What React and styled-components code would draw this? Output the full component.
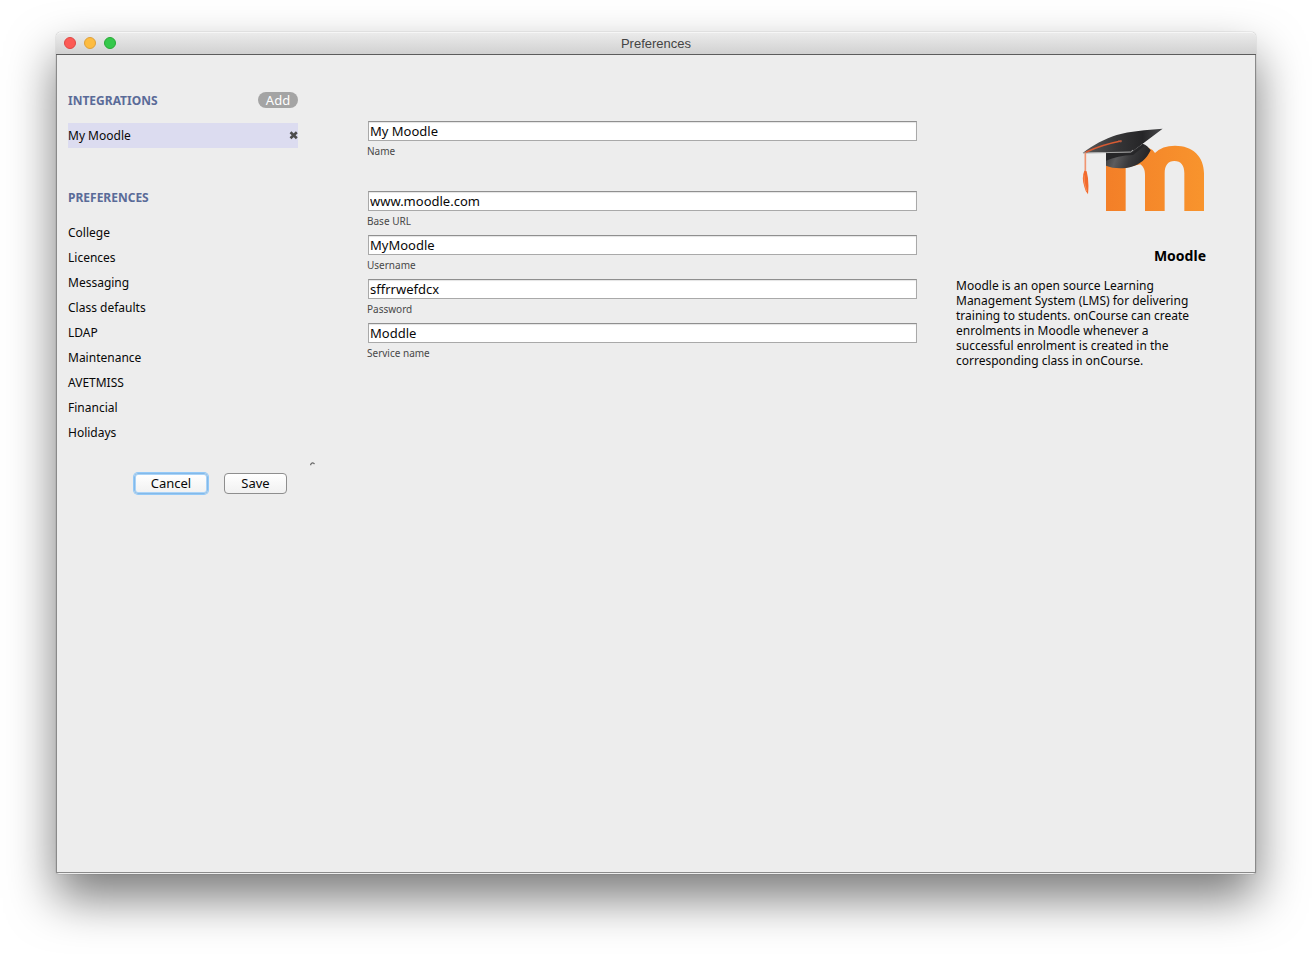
import React from "react";
import styled, { createGlobalStyle } from "styled-components";

const GlobalStyle = createGlobalStyle`
  * { box-sizing: border-box; }
  body {
    margin: 0;
    background: #fff;
    color: #080808;
    font-family: "Noto Sans", "Open Sans", sans-serif;
    font-size: 12px;
    line-height: 15px;
  }
  h1, h2, p, ul { margin: 0; padding: 0; }
  button, input { font-family: inherit; }
`;

const Desktop = styled.div`
  display: flex;
  min-height: 100vh;
  padding: 32px 56px 80px;
`;

const Window = styled.div`
  flex: 1;
  display: flex;
  flex-direction: column;
  border-radius: 5px 5px 3px 3px;
  background: #ededed;
  box-shadow: 0 0 1px rgba(0, 0, 0, 0.5), 0 24px 48px rgba(0, 0, 0, 0.52);
`;

const TitleBar = styled.header`
  display: flex;
  align-items: center;
  height: 23px;
  padding: 0 8px 1px;
  border-top: 1px solid #f6f6f6;
  border-bottom: 1px solid #5c5c5c;
  border-radius: 5px 5px 0 0;
  background: linear-gradient(#ebebeb, #d1d1d1);
`;

const Lights = styled.div`
  flex: 1;
  display: flex;
  gap: 8px;
`;

const Light = styled.button`
  width: 12px;
  height: 12px;
  padding: 0;
  border: 1px solid ${(p) => p.$edge};
  border-radius: 50%;
  background: ${(p) => p.$fill};
`;

const Title = styled.h1`
  padding-top: 2px;
  color: #444;
  font: 400 13px/16px "Liberation Sans", Arial, sans-serif;
`;

const TitleSpacer = styled.div`
  flex: 1;
`;

const Body = styled.div`
  flex: 1;
  display: flex;
  align-items: flex-start;
  padding: 0 49px 0 11px;
  border: solid #8a8a8a;
  border-width: 0 1px 1px;
  margin-bottom: 1px;
`;

const Sidebar = styled.nav`
  display: flex;
  flex-direction: column;
  flex: 0 0 230px;
  padding-top: 37px;
`;

const SectionHeader = styled.div`
  display: flex;
  align-items: center;
  justify-content: space-between;
  height: 16px;
  margin-bottom: 15px;
`;

const SectionTitle = styled.h2`
  padding-top: 2px;
  color: #5a6b98;
  font-size: 12px;
  font-weight: 700;
  line-height: 16px;
`;

const AddButton = styled.button`
  width: 40px;
  height: 16px;
  padding: 0;
  border: 0;
  border-radius: 8px;
  background: #a4a4a4;
  color: #fff;
  font-size: 13px;
  line-height: 16px;
`;

const List = styled.ul`
  list-style: none;
  margin-bottom: ${(p) => p.$gap}px;
`;

const Item = styled.li`
  display: flex;
  align-items: center;
  justify-content: space-between;
  height: 25px;
  background: ${(p) => (p.$selected ? "#dcdcf0" : "transparent")};
`;

const ItemLink = styled.a`
  color: #080808;
  text-decoration: none;
`;

const RemoveButton = styled.button`
  display: flex;
  padding: 0;
  border: 0;
  background: none;
`;

const Actions = styled.div`
  display: flex;
  justify-content: flex-end;
  gap: 16px;
  padding-right: 11px;
`;

const ActionButton = styled.button`
  width: ${(p) => p.$width}px;
  height: 21px;
  padding: 0;
  border: 1px solid ${(p) => (p.$focused ? "#84b9e8" : "#8e8e8e")};
  border-radius: 4px;
  background: linear-gradient(#fff, #f1f1f1);
  box-shadow: ${(p) => (p.$focused ? "0 0 0 1px #93c9f8, inset 0 0 0 1px #a9d3f8" : "none")};
  color: #080808;
  font-size: 13px;
  line-height: 17px;
`;

const Grip = styled.div`
  display: flex;
  flex: 0 0 69px;
  padding: 407px 0 0 12px;
`;

const Form = styled.form`
  flex: 1;
  min-width: 200px;
  padding-top: 66px;
`;

const Field = styled.div`
  display: flex;
  flex-direction: column;
  height: 44px;
  margin-bottom: ${(p) => (p.$spaced ? 26 : 0)}px;
`;

const FieldInput = styled.input`
  height: 20px;
  margin-left: 1px;
  padding: 0 1px;
  border: 1px solid #a9a9a9;
  border-top-color: #8f8f8f;
  background: #fff;
  box-shadow: inset 0 1px 1px #e4e4e4;
  color: #080808;
  font-size: 13px;
  outline: 0;
`;

const FieldLabel = styled.label`
  padding-top: 2px;
  color: #484848;
  font-size: 10px;
  line-height: 16px;
`;

const Info = styled.aside`
  display: flex;
  flex-direction: column;
  align-items: flex-end;
  flex: 0 0 250px;
  margin-left: 39px;
  padding-top: 72px;
`;

const InfoTitle = styled.h2`
  margin: 33px 0 12px;
  color: #000;
  font-size: 14px;
  font-weight: 700;
  line-height: 20px;
`;

const InfoText = styled.p`
  align-self: stretch;
  padding-right: 8px;
`;

const preferences = [
  "College",
  "Licences",
  "Messaging",
  "Class defaults",
  "LDAP",
  "Maintenance",
  "AVETMISS",
  "Financial",
  "Holidays",
];

const fields = [
  { id: "name", label: "Name", value: "My Moodle", spaced: true },
  { id: "url", label: "Base URL", value: "www.moodle.com" },
  { id: "username", label: "Username", value: "MyMoodle" },
  { id: "password", label: "Password", value: "sffrrwefdcx" },
  { id: "service", label: "Service name", value: "Moddle" },
];

function MoodleLogo() {
  return (
    <svg width="124" height="86" viewBox="66 51 372 258" role="img" aria-label="Moodle logo">
      <defs>
        <linearGradient id="orange" x1="0" x2="1">
          <stop offset="0" stopColor="#f37f28" />
          <stop offset="1" stopColor="#f8942d" />
        </linearGradient>
        <linearGradient id="board" x1="0" x2="1">
          <stop offset="0" stopColor="#5a5a5a" />
          <stop offset="0.45" stopColor="#343436" />
          <stop offset="0.75" stopColor="#252527" />
          <stop offset="1" stopColor="#4a4a4c" />
        </linearGradient>
        <linearGradient id="cap" x1="0" y1="0.4" x2="1" y2="0.6">
          <stop offset="0" stopColor="#3a3a3c" />
          <stop offset="0.25" stopColor="#5c5c5e" />
          <stop offset="0.55" stopColor="#3a3a3c" />
          <stop offset="1" stopColor="#202022" />
        </linearGradient>
      </defs>
      <path
        fill="url(#orange)"
        d="M138 303V150H230L262 112Q276 117 285 129Q306 107 345 107C398 107 432 140 432 190V303H373V190C373 166 363 153 343 153C324 153 314 166 314 190V303H255V195C255 180 251 171 241 163L197 173V303Z"
      />
      <path
        fill="url(#cap)"
        d="M138 127L215 125L248 101Q263 106 272 121C260 147 239 164 215 170C191 177 158 176 138 167Z"
      />
      <path fill="#262628" d="M138 129H214L249 103L253 108L219 135Q172 137 138 152Z" />
      <path
        fill="url(#board)"
        d="M68 129C100 104 135 87 170 75C211 63 257 60 308 56L214 127Q140 124 68 129Z"
      />
      <path fill="none" stroke="#a6a6a6" strokeWidth="3" d="M69 129Q140 128 212 126L219 120" />
      <path fill="none" stroke="#d95b32" strokeWidth="5" strokeLinecap="round" d="M183 93Q126 104 79 126" />
      <path fill="none" stroke="#9b5b4a" strokeWidth="2" d="M174 92L184 93L182 98" />
      <path fill="none" stroke="#f09470" strokeWidth="5" d="M76 128V185" />
      <path fill="#f36a2c" d="M73 182Q64 203 73 230Q76 244 84 253Q88 213 80 184Z" />
      <path fill="none" stroke="#f8a070" strokeWidth="2" d="M72 196Q71 219 80 243" />
    </svg>
  );
}

export default function App() {
  return (
    <>
      <GlobalStyle />
      <Desktop>
        <Window>
          <TitleBar>
            <Lights>
              <Light aria-label="Close" $fill="#fc5a55" $edge="#df4744" />
              <Light aria-label="Minimize" $fill="#fdbc40" $edge="#dfa039" />
              <Light aria-label="Zoom" $fill="#35c84b" $edge="#27aa35" />
            </Lights>
            <Title>Preferences</Title>
            <TitleSpacer />
          </TitleBar>
          <Body>
            <Sidebar>
              <SectionHeader>
                <SectionTitle>INTEGRATIONS</SectionTitle>
                <AddButton type="button">Add</AddButton>
              </SectionHeader>
              <List $gap={41}>
                <Item $selected>
                  <ItemLink href="#my-moodle">My Moodle</ItemLink>
                  <RemoveButton type="button" aria-label="Remove My Moodle">
                    <svg width="9" height="9" viewBox="0 0 9 9">
                      <path d="M1.5 1.2L7.8 7.2M7.8 1.2L1.5 7.2" stroke="#4c4c4c" strokeWidth="2.6" />
                    </svg>
                  </RemoveButton>
                </Item>
              </List>
              <SectionHeader>
                <SectionTitle>PREFERENCES</SectionTitle>
              </SectionHeader>
              <List $gap={28}>
                {preferences.map((name) => (
                  <Item key={name}>
                    <ItemLink href={"#" + name.toLowerCase().replace(" ", "-")}>{name}</ItemLink>
                  </Item>
                ))}
              </List>
              <Actions>
                <ActionButton type="button" $width={74} $focused>
                  Cancel
                </ActionButton>
                <ActionButton type="submit" form="integration" $width={63}>
                  Save
                </ActionButton>
              </Actions>
            </Sidebar>
            <Grip>
              <svg width="5" height="4" viewBox="0 0 5 4" aria-hidden="true">
                <path d="M0.5 3.2L1.2 1.6Q2.8 0 4.5 2" fill="none" stroke="#666" strokeWidth="1.2" />
              </svg>
            </Grip>
            <Form id="integration" onSubmit={(e) => e.preventDefault()}>
              {fields.map((f) => (
                <Field key={f.id} $spaced={f.spaced}>
                  <FieldInput id={f.id} type="text" defaultValue={f.value} />
                  <FieldLabel htmlFor={f.id}>{f.label}</FieldLabel>
                </Field>
              ))}
            </Form>
            <Info>
              <MoodleLogo />
              <InfoTitle>Moodle</InfoTitle>
              <InfoText>
                Moodle is an open source Learning Management System (LMS) for delivering training to
                students. onCourse can create enrolments in Moodle whenever a successful enrolment is
                created in the corresponding class in onCourse.
              </InfoText>
            </Info>
          </Body>
        </Window>
      </Desktop>
    </>
  );
}
